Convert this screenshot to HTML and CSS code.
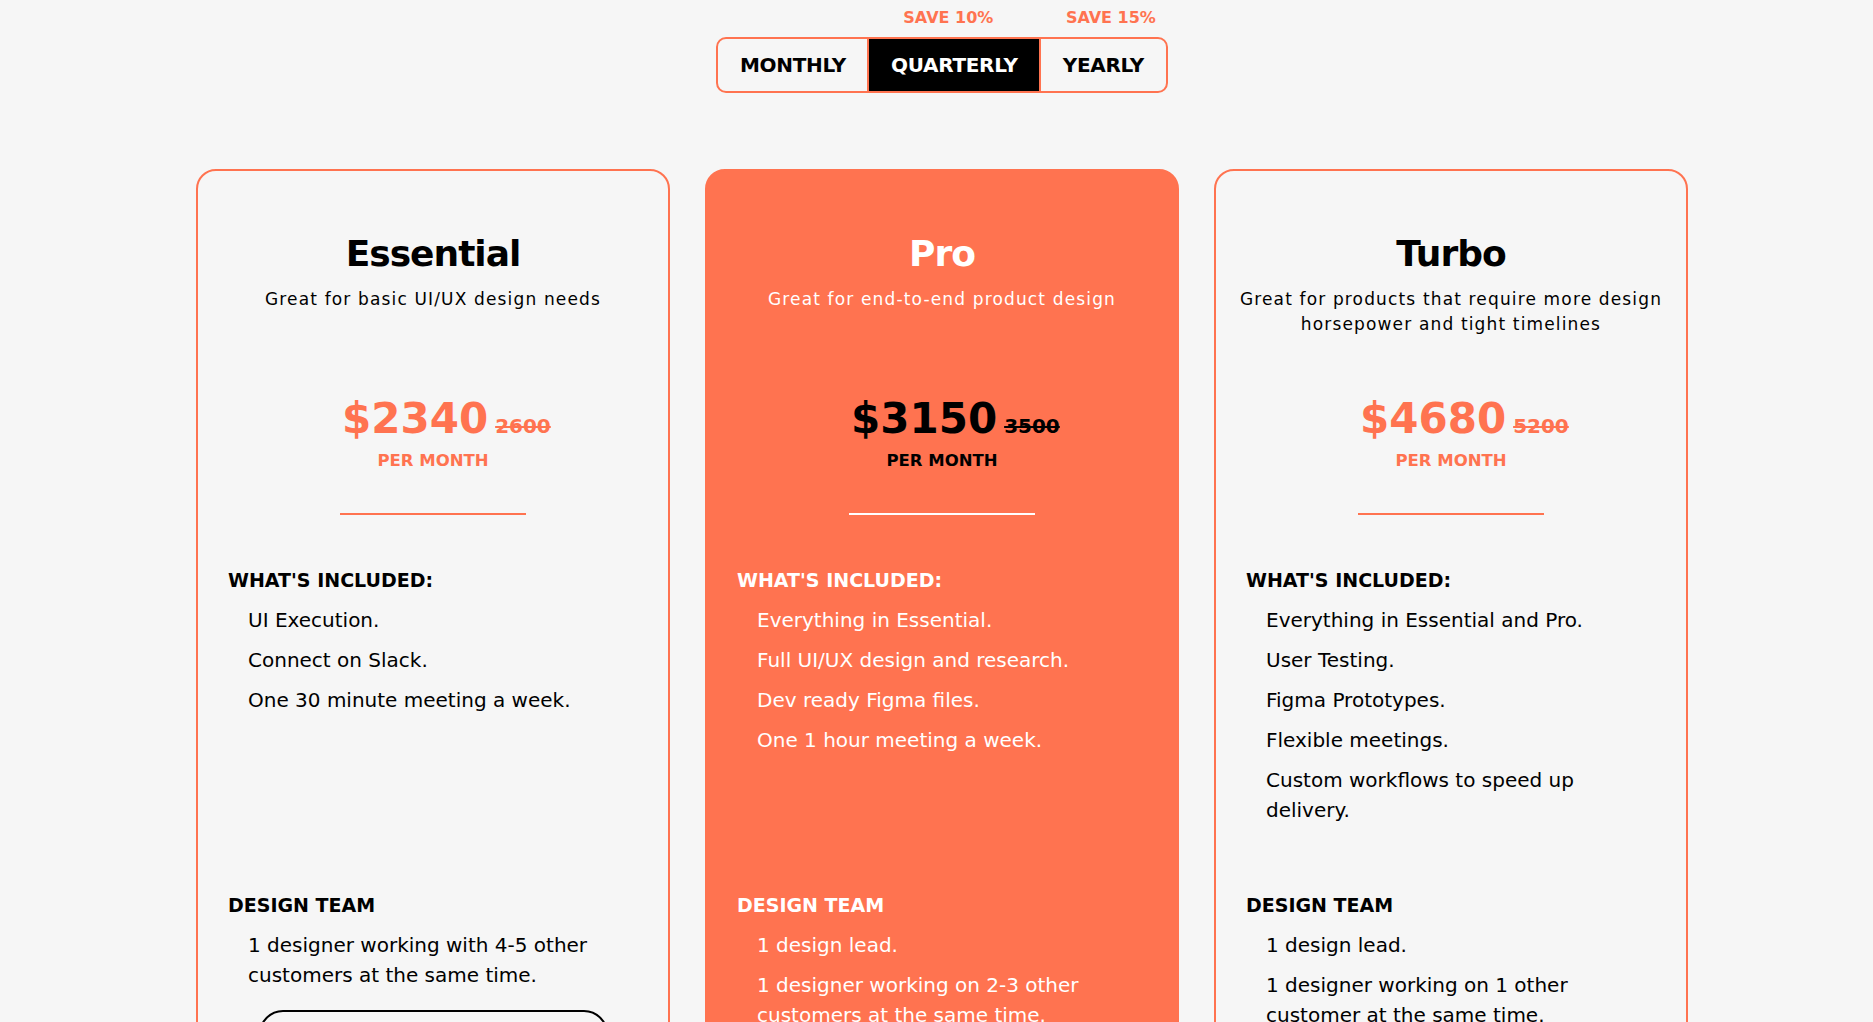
FILE: index.html
```html
<!DOCTYPE html>
<html lang="en">
<head>
<meta charset="utf-8">
<title>Pricing</title>
<link rel="stylesheet" href="styles.css">
</head>
<body>
<main class="page">
  <div class="toggle-wrap">
    <div class="toggle">
      <button class="toggle-btn">MONTHLY</button>
      <button class="toggle-btn is-active"><span class="save save-q">SAVE 10%</span>QUARTERLY</button>
      <button class="toggle-btn"><span class="save save-y">SAVE 15%</span>YEARLY</button>
    </div>
  </div>

  <section class="plans">
    <article class="card">
      <header class="card-head">
        <h2 class="card-title">Essential</h2>
        <p class="card-sub">Great for basic UI/UX design needs</p>
      </header>
      <div class="price"><span class="price-now">$2340</span><span class="price-was">2600</span></div>
      <div class="per">PER MONTH</div>
      <div class="rule"></div>
      <div class="features">
        <h3 class="feat-title">WHAT'S INCLUDED:</h3>
        <ul class="feat-list">
          <li>UI Execution.</li>
          <li>Connect on Slack.</li>
          <li>One 30 minute meeting a week.</li>
        </ul>
      </div>
      <div class="team">
        <h3 class="feat-title">DESIGN TEAM</h3>
        <ul class="feat-list">
          <li>1 designer working with 4-5 other customers at the same time.</li>
        </ul>
      </div>
      <button class="cta">GET STARTED</button>
    </article>

    <article class="card card--featured">
      <header class="card-head">
        <h2 class="card-title">Pro</h2>
        <p class="card-sub">Great for end-to-end product design</p>
      </header>
      <div class="price"><span class="price-now">$3150</span><span class="price-was">3500</span></div>
      <div class="per">PER MONTH</div>
      <div class="rule"></div>
      <div class="features">
        <h3 class="feat-title">WHAT'S INCLUDED:</h3>
        <ul class="feat-list">
          <li>Everything in Essential.</li>
          <li>Full UI/UX design and research.</li>
          <li>Dev ready Figma files.</li>
          <li>One 1 hour meeting a week.</li>
        </ul>
      </div>
      <div class="team">
        <h3 class="feat-title">DESIGN TEAM</h3>
        <ul class="feat-list">
          <li>1 design lead.</li>
          <li>1 designer working on 2-3 other customers at the same time.</li>
        </ul>
      </div>
      <button class="cta">GET STARTED</button>
    </article>

    <article class="card">
      <header class="card-head">
        <h2 class="card-title">Turbo</h2>
        <p class="card-sub">Great for products that require more design horsepower and tight timelines</p>
      </header>
      <div class="price"><span class="price-now">$4680</span><span class="price-was">5200</span></div>
      <div class="per">PER MONTH</div>
      <div class="rule"></div>
      <div class="features">
        <h3 class="feat-title">WHAT'S INCLUDED:</h3>
        <ul class="feat-list">
          <li>Everything in Essential and Pro.</li>
          <li>User Testing.</li>
          <li>Figma Prototypes.</li>
          <li>Flexible meetings.</li>
          <li>Custom workflows to speed up delivery.</li>
        </ul>
      </div>
      <div class="team">
        <h3 class="feat-title">DESIGN TEAM</h3>
        <ul class="feat-list">
          <li>1 design lead.</li>
          <li>1 designer working on 1 other customer at the same time.</li>
        </ul>
      </div>
      <button class="cta">GET STARTED</button>
    </article>
  </section>
</main>
</body>
</html>
```

FILE: styles.css
```css
* { box-sizing: border-box; }

html, body {
  margin: 0;
  padding: 0;
}

body {
  background: #f6f6f6;
  color: #000;
  font-family: "DejaVu Sans", "Liberation Sans", sans-serif;
}

.page {
  padding: 37px 0 0 11px;
}

/* ---------- billing toggle ---------- */
.toggle-wrap {
  display: flex;
  justify-content: center;
}

.toggle {
  display: flex;
  border: 2px solid #ff7350;
  border-radius: 10px;
}

.toggle-btn {
  position: relative;
  height: 52px;
  padding: 0 21.5px;
  background: transparent;
  border: 0;
  color: #000;
  font-family: "DejaVu Sans", sans-serif;
  font-weight: 700;
  font-size: 20px;
  line-height: 52px;
  letter-spacing: -0.3px;
}

.toggle-btn:first-child { border-radius: 8px 0 0 8px; }
.toggle-btn:last-child { border-radius: 0 8px 8px 0; }

.toggle-btn + .toggle-btn {
  border-left: 2px solid #ff7350;
}

.toggle-btn.is-active {
  background: #000;
  color: #fff;
}

.save {
  position: absolute;
  top: -31.5px;
  left: 50%;
  color: #ff7350;
  font-size: 16px;
  line-height: 20px;
  font-weight: 700;
  letter-spacing: 0;
  white-space: nowrap;
}

.save-q { transform: translateX(calc(-50% - 6px)); }
.save-y { transform: translateX(calc(-50% + 7.5px)); }

/* ---------- plans ---------- */
.plans {
  width: 1492px;
  margin: 76px auto 0;
  display: grid;
  grid-template-columns: repeat(3, 474px);
  column-gap: 35px;
}

.card {
  border: 2px solid #ff7350;
  border-radius: 20px;
  padding: 61px 20px 40px;
}

.card--featured {
  background: #ff7350;
  color: #fff;
}

.card-head {
  min-height: 162px;
  text-align: center;
}

.card-title {
  margin: 0;
  font-size: 36px;
  line-height: 44px;
  font-weight: 700;
  letter-spacing: -1px;
}

.card-sub {
  margin: 11px 0 0;
  font-size: 17px;
  line-height: 25px;
  letter-spacing: 1.15px;
}

.price {
  display: flex;
  align-items: baseline;
  padding-left: 124px;
  height: 50px;
  color: #ff7350;
}

.price-now {
  font-size: 42px;
  line-height: 50px;
  font-weight: 700;
}

.price-was {
  margin-left: 7px;
  font-size: 20px;
  line-height: 20px;
  font-weight: 700;
  text-decoration: line-through;
  text-decoration-thickness: 2px;
}

.per {
  margin-top: 7px;
  text-align: center;
  font-size: 16.5px;
  line-height: 20px;
  font-weight: 700;
  color: #ff7350;
}

.card--featured .price,
.card--featured .per {
  color: #000;
}

.rule {
  width: 186px;
  height: 2px;
  margin: 41.5px auto 0;
  background: #ff7350;
}

.card--featured .rule { background: #fff; }

.features {
  margin-top: 53.5px;
  min-height: 325px;
  padding: 0 20px 0 10px;
}

.team {
  padding: 0 20px 0 10px;
}

.feat-title {
  margin: 0;
  font-size: 19px;
  line-height: 24px;
  font-weight: 700;
}

.feat-list {
  list-style: none;
  margin: 12.5px 0 0;
  padding: 0 0 0 20px;
}

.feat-list li {
  font-size: 20px;
  line-height: 30px;
}

.feat-list li + li {
  margin-top: 10px;
}

.cta {
  display: block;
  width: 349px;
  height: 56px;
  margin: 20px auto 0;
  border: 2px solid #000;
  border-radius: 24px;
  background: transparent;
  color: #000;
  font-family: "DejaVu Sans", sans-serif;
  font-size: 18px;
  font-weight: 700;
}

.card--featured .cta {
  border-color: #fff;
  color: #fff;
}
```
